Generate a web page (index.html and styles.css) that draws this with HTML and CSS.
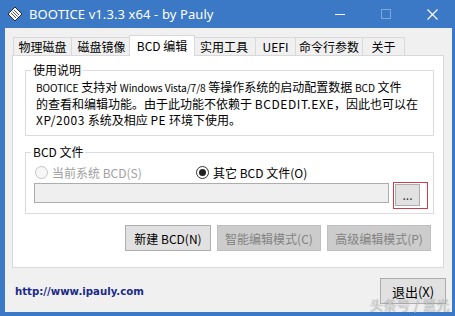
FILE: index.html
```html
<!DOCTYPE html>
<html lang="zh-CN">
<head>
    <meta charset="UTF-8">
    <title>BOOTICE v1.3.3 x64 - by Pauly</title>
    <link rel="stylesheet" href="styles.css">
</head>
<body>
    <div class="window">
        <div class="titlebar">
            <svg class="app-icon" width="16" height="16" viewBox="0 0 16 16">
                <polygon points="8,1 15,8 8,15 1,8" fill="#f4f4f4" stroke="#2a2a2a" stroke-width="1"/>
                <line x1="4" y1="7" x2="9" y2="12" stroke="#555" stroke-width="1"/>
                <line x1="5.5" y1="5.5" x2="10.5" y2="10.5" stroke="#555" stroke-width="1"/>
                <line x1="7" y1="4" x2="12" y2="9" stroke="#555" stroke-width="1"/>
            </svg>
            <span class="title">BOOTICE v1.3.3 x64 - by Pauly</span>
            <div class="controls">
                <span class="ctl">
                    <svg width="10" height="10" viewBox="0 0 10 10"><line x1="0" y1="5.5" x2="10" y2="5.5" stroke="#fff" stroke-width="1"/></svg>
                </span>
                <span class="ctl">
                    <svg width="10" height="10" viewBox="0 0 10 10"><rect x="0.5" y="0.5" width="9" height="9" fill="none" stroke="rgba(255,255,255,0.35)" stroke-width="1"/></svg>
                </span>
                <span class="ctl">
                    <svg width="11" height="11" viewBox="0 0 11 11"><path d="M0.5 0.5 L10.5 10.5 M10.5 0.5 L0.5 10.5" stroke="#fff" stroke-width="1.2"/></svg>
                </span>
            </div>
        </div>

        <div class="client">
            <div class="tabs">
                <div class="tab w58">物理磁盘</div>
                <div class="tab w60">磁盘镜像</div>
                <div class="tab w62 active">BCD 编辑</div>
                <div class="tab w62">实用工具</div>
                <div class="tab w40">UEFI</div>
                <div class="tab w67">命令行参数</div>
                <div class="tab w43">关于</div>
            </div>

            <div class="panel">
                <fieldset class="group info">
                    <legend>使用说明</legend>
                    <p><span class="en">BOOTICE</span> 支持对 <span class="en">Windows Vista/7/8</span> 等操作系统的启动配置数据 <span class="en">BCD</span> 文件<br>的查看和编辑功能。由于此功能不依赖于 <span class="cap">BCDEDIT.EXE</span>，因此也可以在<br><span class="cap">XP/2003</span> 系统及相应 <span class="cap">PE</span> 环境下使用。</p>
                </fieldset>

                <fieldset class="group bcd">
                    <legend>BCD 文件</legend>
                    <div class="radios">
                        <label class="radio disabled"><span class="dot"></span>当前系统 BCD(S)</label>
                        <label class="radio checked"><span class="dot"></span>其它 BCD 文件(O)</label>
                    </div>
                    <div class="file-row">
                        <div class="path"></div>
                        <span class="mark"><button class="btn browse">...</button></span>
                    </div>
                </fieldset>

                <div class="actions">
                    <button class="btn new">新建 BCD(N)</button>
                    <button class="btn wide" disabled>智能编辑模式(C)</button>
                    <button class="btn wide" disabled>高级编辑模式(P)</button>
                </div>
            </div>

            <div class="footer">
                <a class="link" href="#">http://www.ipauly.com</a>
                <button class="btn exit">退出(X)</button>
            </div>
        </div>

        <div class="watermark">头条号 / 慧光</div>
    </div>
</body>
</html>
```

FILE: styles.css
```css
body {
    margin: 0;
    background-color: #3b78c6;
    font-family: "Noto Sans CJK SC", "Noto Sans", sans-serif;
    font-size: 12px;
    color: #000;
}
.window {
    position: relative;
    width: 455px;
    height: 316px;
    background-color: #3b78c6;
    display: flex;
    flex-direction: column;
}
.titlebar {
    height: 28px;
    display: flex;
    align-items: center;
    color: #fff;
}
.app-icon {
    margin-left: 7px;
    margin-right: 6px;
}
.title {
    font-family: "Noto Sans", sans-serif;
    font-size: 13px;
    letter-spacing: 0.1px;
}
.controls {
    margin-left: auto;
    display: flex;
    height: 28px;
}
.ctl {
    width: 46px;
    display: flex;
    align-items: center;
    justify-content: center;
}
.ctl svg {
    display: block;
}

/* client area */
.client {
    flex: 1;
    margin: 0 3px 4px 5px;
    background-color: #f0f0f0;
    padding: 7px 8px 0 7px;
    display: flex;
    flex-direction: column;
}
.tabs {
    height: 20px;
    display: flex;
    align-items: flex-end;
    padding-left: 1px;
}
.tab {
    height: 18px;
    box-sizing: border-box;
    border: 1px solid #d9d9d9;
    border-bottom: none;
    border-right: none;
    line-height: 17px;
    text-align: center;
    background-color: #f0f0f0;
    white-space: nowrap;
}
.tab:last-child {
    border-right: 1px solid #d9d9d9;
}
.w40 { width: 40px; }
.w43 { width: 43px; }
.w58 { width: 58px; }
.w60 { width: 60px; }
.w62 { width: 62px; }
.w67 { width: 67px; }
.tab.active {
    position: relative;
    z-index: 1;
    width: 66px;
    height: 21px;
    margin: 0 -2px -1px;
    background-color: #fff;
    border-right: 1px solid #d9d9d9;
    line-height: 19px;
}
.tab.active + .tab {
    border-left: none;
}
.panel {
    height: 213px;
    box-sizing: border-box;
    background-color: #fff;
    border: 1px solid #d9d9d9;
    padding: 0 9px 0 12px;
    display: flex;
    flex-direction: column;
}

/* group boxes */
.group {
    margin: 0;
    min-width: 0;
    border: 1px solid #dcdcdc;
}
.group legend {
    padding: 0 2px;
    margin-left: -5px;
    line-height: 16px;
}
.group.info {
    margin-top: 6px;
    padding: 1px 10px 7px;
}
.group.info p {
    margin: 0;
    line-height: 16px;
    white-space: nowrap;
}
.en {
    font-size: 10.2px;
    letter-spacing: -0.1px;
}
.cap {
    letter-spacing: 0.6px;
}
.group.bcd {
    margin-top: 8px;
    padding: 4px 5px 4px 10px;
}
.radios {
    display: flex;
    height: 16px;
    align-items: center;
}
.radio {
    display: flex;
    align-items: center;
    gap: 4px;
    white-space: nowrap;
}
.radio.disabled {
    width: 161px;
    margin-left: -1px;
    color: #a0a0a0;
}
.dot {
    width: 13px;
    height: 13px;
    box-sizing: border-box;
    border-radius: 50%;
    border: 1px solid #333;
    background-color: #fff;
    display: flex;
    align-items: center;
    justify-content: center;
}
.radio.disabled .dot {
    border-color: #c4c4c4;
    background-color: #f7f7f7;
}
.radio.checked .dot::after {
    content: "";
    width: 7px;
    height: 7px;
    border-radius: 50%;
    background-color: #222;
}
.file-row {
    margin-top: 2px;
    display: flex;
    align-items: flex-start;
    gap: 4px;
}
.path {
    flex: 1;
    height: 20px;
    margin-top: 1px;
    margin-left: -2px;
    box-sizing: border-box;
    border: 1px solid #adadad;
    background-color: #efefef;
}
.mark {
    display: block;
    border: 1px solid #d23c4a;
    padding: 1px 7px 2px 1px;
}

/* buttons */
.btn {
    height: 26px;
    box-sizing: border-box;
    padding: 0;
    border: 1px solid #adadad;
    background-color: #e1e1e1;
    font-family: inherit;
    font-size: 12px;
    color: #000;
}
.btn:disabled {
    background-color: #cccccc;
    border-color: #bfbfbf;
    color: #838383;
}
.btn.browse {
    display: block;
    width: 25px;
    height: 22px;
    line-height: 14px;
    color: #333;
}
.actions {
    margin-top: 11px;
    margin-right: 3px;
    display: flex;
    justify-content: flex-end;
    gap: 6px;
}
.btn.new {
    width: 86px;
}
.btn.wide {
    width: 104px;
}
.footer {
    padding-top: 10px;
    display: flex;
    align-items: center;
    justify-content: space-between;
    margin-right: -2px;
}
.link {
    margin-left: 3px;
    font-family: "DejaVu Sans", sans-serif;
    font-weight: bold;
    font-size: 10.2px;
    color: #1b2a8a;
    text-decoration: none;
}
.btn.exit {
    width: 66px;
    font-size: 13px;
}

.watermark {
    position: absolute;
    right: 5px;
    bottom: 2px;
    font-size: 13px;
    color: rgba(235, 235, 235, 0.75);
    text-shadow: 0 0 1px rgba(90, 90, 90, 0.8);
    letter-spacing: 0.5px;
}
```
